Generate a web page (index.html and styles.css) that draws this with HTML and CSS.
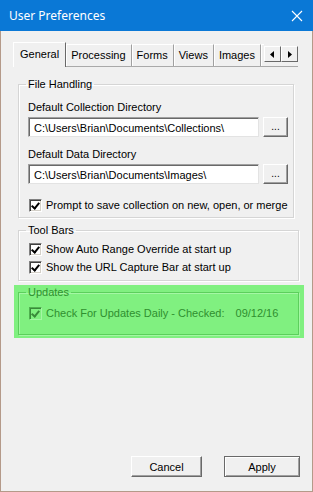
FILE: index.html
```html
<!DOCTYPE html>
<html>
<head>
    <title>User Preferences</title>
    <link rel="stylesheet" href="styles.css">
</head>
<body>
    <div class="window">
        <div class="titlebar">
            <span class="title">User Preferences</span>
            <svg class="close" width="12" height="12" viewBox="0 0 12 12">
                <path d="M1 1 L11 11 M11 1 L1 11" stroke="#fff" stroke-width="1.1" fill="none"/>
            </svg>
        </div>

        <div class="dialog">
            <div class="tabs">
                <div class="tab active">General</div>
                <div class="tab">Processing</div>
                <div class="tab">Forms</div>
                <div class="tab">Views</div>
                <div class="tab">Images</div>
                <div class="tab tab-cut"></div>
                <div class="tab-scroll">
                    <span class="scroll-btn">
                        <svg width="5" height="7" viewBox="0 0 5 7"><path d="M4 0 L0 3.5 L4 7 Z" fill="#000"/></svg>
                    </span>
                    <span class="scroll-btn">
                        <svg width="5" height="7" viewBox="0 0 5 7"><path d="M1 0 L5 3.5 L1 7 Z" fill="#000"/></svg>
                    </span>
                </div>
            </div>

            <div class="pane">
                <fieldset class="group group-files">
                    <legend>File Handling</legend>
                    <div class="field-label first">Default Collection Directory</div>
                    <div class="path-row">
                        <div class="path-input">C:\Users\Brian\Documents\Collections\</div>
                        <div class="btn btn-browse">...</div>
                    </div>
                    <div class="field-label">Default Data Directory</div>
                    <div class="path-row">
                        <div class="path-input">C:\Users\Brian\Documents\Images\</div>
                        <div class="btn btn-browse">...</div>
                    </div>
                    <div class="check-row check-prompt">
                        <span class="checkbox checked"></span>
                        Prompt to save collection on new, open, or merge
                    </div>
                </fieldset>

                <fieldset class="group group-toolbars">
                    <legend>Tool Bars</legend>
                    <div class="check-row first">
                        <span class="checkbox checked"></span>
                        Show Auto Range Override at start up
                    </div>
                    <div class="check-row">
                        <span class="checkbox checked"></span>
                        Show the URL Capture Bar at start up
                    </div>
                </fieldset>

                <div class="highlight">
                    <fieldset class="group group-updates disabled">
                        <legend>Updates</legend>
                        <div class="check-row first">
                            <span class="checkbox checked"></span>
                            Check For Updates Daily - Checked:
                            <span class="check-date">09/12/16</span>
                        </div>
                    </fieldset>
                </div>
            </div>

            <div class="buttons">
                <div class="btn btn-cancel">Cancel</div>
                <div class="btn btn-apply">Apply</div>
            </div>
        </div>
    </div>
</body>
</html>
```

FILE: styles.css
```css
html, body { margin: 0; padding: 0; }
body { font-family: "Liberation Sans", Arial, sans-serif; font-size: 11px; color: #000; }

.window { width: 313px; height: 492px; box-sizing: border-box; border: 1px solid #b49a89; border-top: none; background: #f0f0f0; display: flex; flex-direction: column; }

.titlebar { height: 31px; background: #0a78d6; display: flex; align-items: center; justify-content: space-between; padding: 0 10px 0 9px; margin: 0 -1px; }
.title { color: #fff; font-family: "Noto Sans", "Open Sans", sans-serif; font-size: 12px; }
.close { display: block; }

.dialog { flex: 1; display: flex; flex-direction: column; }

/* tab strip */
.tabs { display: flex; align-items: flex-end; height: 25px; margin: 10px 0 0 12px; width: 285px; border-bottom: 1px solid #a9a9a9; position: relative; }
.tab { height: 22px; line-height: 21px; padding: 0 5px 0 4px; border: 1px solid #fff; border-right-color: #a0a0a0; border-bottom: none; box-sizing: border-box; background: #f0f0f0; font-size: 11px; }
.tab.active { height: 25px; line-height: 22px; padding: 0 6px; margin-bottom: -1px; position: relative; border-right-color: #696969; }
.tab-cut { width: 3px; padding: 0; border-right: none; }
.tab-scroll { display: flex; margin-left: auto; margin-bottom: 4px; }
.scroll-btn { width: 17px; height: 16px; box-sizing: border-box; border: 1px solid #fff; border-right-color: #696969; border-bottom-color: #696969; display: flex; align-items: center; justify-content: center; background: #f0f0f0; }

/* group boxes */
.pane { padding: 0 0 0 17px; }
.group { margin: 0; padding: 0 0 0 9px; border: 1px solid #d5d5d5; box-shadow: inset 1px 1px 0 #fff, 1px 1px 0 #fff; }
.group legend { padding: 0 2px; margin-left: -2px; line-height: 13px; font-size: 11px; }
.group-files { width: 276px; box-sizing: border-box; margin-top: 11px; padding-bottom: 5px; }
.group-toolbars { width: 281px; box-sizing: border-box; margin-top: 6px; padding-bottom: 6px; }

.field-label { line-height: 13px; margin-top: 11px; margin-bottom: 3px; font-size: 11px; }
.field-label.first { margin-top: 10px; }

.path-row { display: flex; gap: 4px; }
.path-input { width: 231px; height: 20px; box-sizing: border-box; background: #fff; border: 1px solid #a0a0a0; border-right-color: #e3e3e3; border-bottom-color: #e3e3e3; box-shadow: inset 1px 1px 0 #696969; padding: 3px 0 0 5px; font-size: 11px; line-height: 14px; white-space: nowrap; }

.btn { box-sizing: border-box; height: 21px; background: #f0f0f0; border: 1px solid #fff; border-right-color: #696969; border-bottom-color: #696969; box-shadow: inset -1px -1px 0 #a0a0a0; display: flex; align-items: center; justify-content: center; font-size: 11px; }
.btn-browse { width: 25px; height: 20px; font-size: 10px; padding-bottom: 1px; }

.check-row { display: flex; align-items: center; height: 14px; margin-top: 4px; font-size: 11px; white-space: nowrap; }
.check-row.first { margin-top: 5px; }
.check-prompt { margin-top: 14px; }
.checkbox { width: 13px; height: 13px; box-sizing: border-box; margin: 0 4px 0 1px; background: #fff; border: 1px solid #808080; border-right-color: #fff; border-bottom-color: #fff; box-shadow: inset 1px 1px 0 #404040, inset -1px -1px 0 #d4d0c8; position: relative; }
.checkbox.checked::after { content: ""; position: absolute; left: 3px; top: 1px; width: 3px; height: 6px; border: solid #000; border-width: 0 2px 2px 0; transform: rotate(40deg); }

/* highlighted updates section */
.highlight { width: 290px; box-sizing: border-box; margin: 4px 0 0 -4px; padding: 1px 5px 3px 4px; background: #80f080; }
.group-updates { width: 281px; box-sizing: border-box; padding-bottom: 14px; border-color: #5ccf5c; box-shadow: inset 1px 1px 0 #a4f7a4, 1px 1px 0 #a4f7a4; }
.group-updates legend, .group-updates .check-row { color: #2f8f2f; }
.group-updates .check-row.first { margin-top: 7px; }
.group-updates .checkbox { background: #80f080; border-color: #4fb04f; border-right-color: #a4f7a4; border-bottom-color: #a4f7a4; box-shadow: inset 1px 1px 0 #3a8a3a; }
.group-updates .checkbox.checked::after { border-color: #3a8a3a; }
.check-date { margin-left: 11px; }

/* dialog buttons */
.buttons { margin-top: auto; margin-bottom: 14px; padding-right: 12px; display: flex; justify-content: flex-end; gap: 22px; }
.btn-cancel { width: 71px; }
.btn-apply { width: 76px; border: 1px solid #696969; box-shadow: inset 1px 1px 0 #fff, inset -1px -1px 0 #a0a0a0; }
```
